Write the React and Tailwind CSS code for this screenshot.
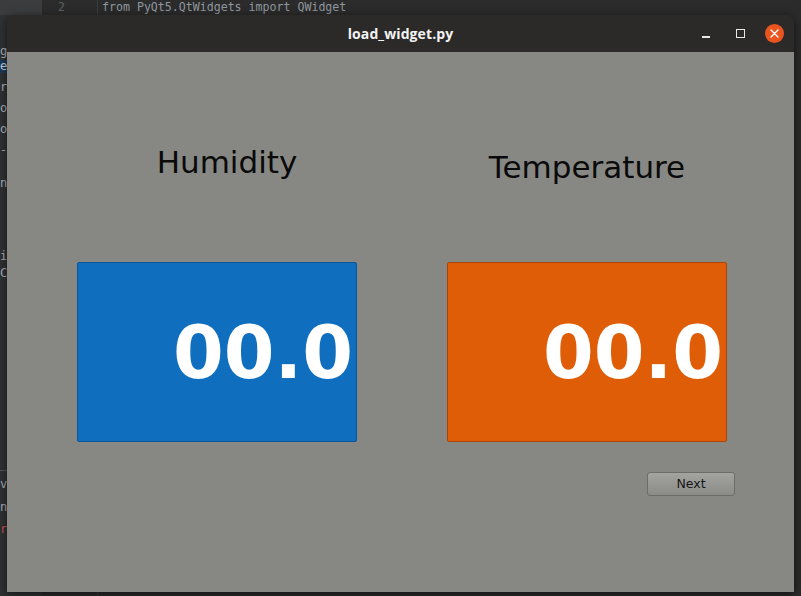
import React from 'react';

const sideLines = [
  { top: 'mt-[30px]', text: 'g', hl: false },
  { top: 'mt-[2px]', text: 'e', hl: true },
  { top: 'mt-[8px]', text: 'r', hl: false },
  { top: 'mt-[8px]', text: 'o.', hl: false },
  { top: 'mt-[8px]', text: 'o.', hl: false },
  { top: 'mt-[8px]', text: '-f', hl: false },
  { top: 'mt-[20px]', text: 'nt', hl: false },
  { top: 'mt-[60px]', text: 'ie', hl: false },
  { top: 'mt-[4px]', text: 'Co', hl: false },
];

const Readout = ({ label, labelClass, boxClass, gapClass }) => (
  <div className="flex flex-col w-[280px]">
    <div className={`h-[36px] leading-[36px] text-[31px] text-[#0a0a0a] text-center whitespace-nowrap ${labelClass}`}>
      {label}
    </div>
    <div
      className={`h-[180px] border rounded-[2px] flex items-center justify-end pr-[3px] ${gapClass} ${boxClass}`}
    >
      <span className="text-[73px] leading-none font-bold text-white">00.0</span>
    </div>
  </div>
);

export default function App() {
  return (
    <div className="relative w-[801px] h-[596px] overflow-hidden bg-[#2b2b2b] font-['DejaVu_Sans',sans-serif]">
      {/* editor behind the window */}
      <div className="flex h-full">
        <div className="w-[42px] flex flex-col bg-[#2f3133] text-[12px] text-[#a9b0b8] font-['DejaVu_Sans_Mono',monospace]">
          <div className="h-[15px] bg-[#3a3c3e]" />
          {sideLines.map((l, i) => (
            <div
              key={i}
              className={`${l.top} h-[13px] leading-[13px] whitespace-nowrap ${l.hl ? 'bg-[#1c3b58] text-[#c8d4e0]' : ''}`}
            >
              {l.text}
            </div>
          ))}
          <div className="mt-[190px] border-t border-[#55585b] pt-[4px] h-[26px] leading-[18px]">vi</div>
          <div className="mt-[4px] h-[14px] leading-[14px]">n,</div>
          <div className="mt-[8px] h-[14px] leading-[14px] text-[#c7524a]">ro</div>
        </div>
        <div className="w-[56px] bg-[#2b2b2b] border-r border-[#3c3c3c] text-[#5c6064] text-[11.6px] font-['DejaVu_Sans_Mono',monospace]">
          <div className="h-[15px] leading-[15px] pl-[16px]">2</div>
        </div>
        <div className="flex-1 pl-[4px] text-[#8f979f] text-[11.6px] font-['DejaVu_Sans_Mono',monospace]">
          <div className="h-[15px] leading-[15px] whitespace-nowrap">from PyQt5.QtWidgets import QWidget</div>
        </div>
      </div>

      {/* application window */}
      <div className="absolute left-[7px] top-[15px] w-[787px] h-[577px] flex flex-col rounded-t-[8px] overflow-hidden shadow-[0_2px_10px_rgba(0,0,0,0.6)]">
        <div className="relative h-[37px] bg-[#2c2a29] flex items-center justify-center">
          <span className="text-[14px] font-bold text-[#f3f3f3] font-['Open_Sans','DejaVu_Sans',sans-serif] tracking-[0.1px]">
            load_widget.py
          </span>
          <div className="absolute right-[10px] top-0 h-full flex items-center">
            <div className="w-[8px] h-[2px] bg-[#e8e8e8] mt-[6px] mr-[26px]" />
            <div className="w-[9px] h-[9px] border-[1.5px] border-[#e8e8e8] mr-[20px]" />
            <div className="w-[19px] h-[19px] rounded-full bg-[#e9541f] flex items-center justify-center">
              <svg width="9" height="9" viewBox="0 0 9 9">
                <path d="M1 1 L8 8 M8 1 L1 8" stroke="#ffffff" strokeWidth="1.4" strokeLinecap="round" />
              </svg>
            </div>
          </div>
        </div>

        <div className="flex-1 bg-[#878883] flex flex-col">
          <div className="flex pl-[70px] gap-[90px]">
            <div className="pt-[92px]">
              <Readout
                label="Humidity"
                labelClass="pl-[20px]"
                gapClass="mt-[82px]"
                boxClass="bg-[#106ebe] border-[#0c5596]"
              />
            </div>
            <div className="pt-[97px]">
              <Readout
                label="Temperature"
                labelClass=""
                gapClass="mt-[77px]"
                boxClass="bg-[#e05d08] border-[#a74608]"
              />
            </div>
          </div>
          <div className="flex justify-end pr-[59px] mt-[30px]">
            <button className="w-[88px] h-[24px] rounded-[3px] border border-[#6c6c68] bg-gradient-to-b from-[#a3a39f] to-[#8b8b87] text-[12.5px] text-[#161616] leading-none">
              Next
            </button>
          </div>
        </div>
      </div>
    </div>
  );
}
